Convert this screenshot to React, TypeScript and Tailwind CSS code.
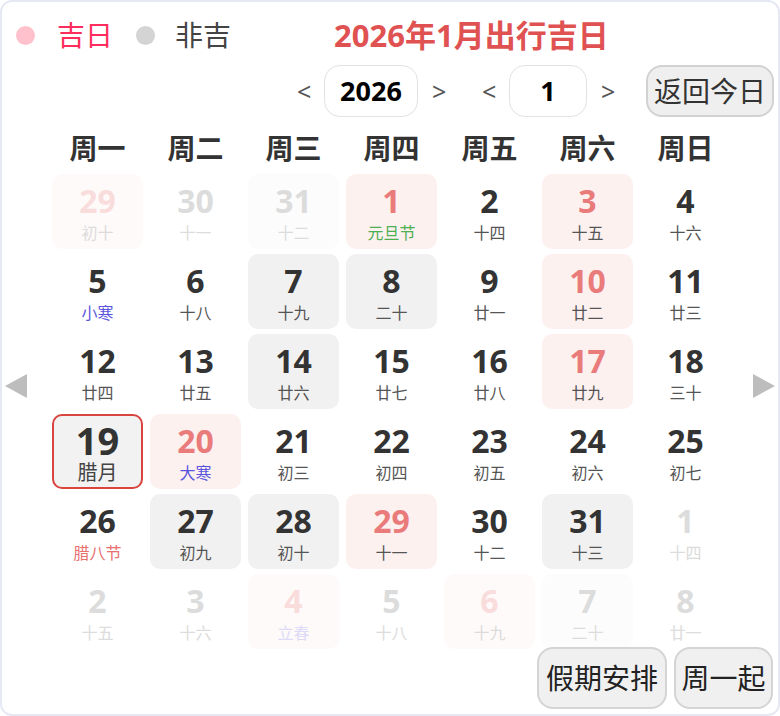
type Kind = "plain" | "red" | "gray";

type Day = {
  d: number;
  l: string;
  kind?: Kind;
  faded?: boolean;
  lc?: string;
  today?: boolean;
};

const WEEK = ["周一", "周二", "周三", "周四", "周五", "周六", "周日"];

const DAYS: Day[] = [
  { d: 29, l: "初十", kind: "red", faded: true },
  { d: 30, l: "十一", faded: true },
  { d: 31, l: "十二", kind: "gray", faded: true },
  { d: 1, l: "元旦节", kind: "red", lc: "text-[#4caf50]" },
  { d: 2, l: "十四" },
  { d: 3, l: "十五", kind: "red" },
  { d: 4, l: "十六" },

  { d: 5, l: "小寒", lc: "text-[#5b55dd]" },
  { d: 6, l: "十八" },
  { d: 7, l: "十九", kind: "gray" },
  { d: 8, l: "二十", kind: "gray" },
  { d: 9, l: "廿一" },
  { d: 10, l: "廿二", kind: "red" },
  { d: 11, l: "廿三" },

  { d: 12, l: "廿四" },
  { d: 13, l: "廿五" },
  { d: 14, l: "廿六", kind: "gray" },
  { d: 15, l: "廿七" },
  { d: 16, l: "廿八" },
  { d: 17, l: "廿九", kind: "red" },
  { d: 18, l: "三十" },

  { d: 19, l: "腊月", today: true },
  { d: 20, l: "大寒", kind: "red", lc: "text-[#5b55dd]" },
  { d: 21, l: "初三" },
  { d: 22, l: "初四" },
  { d: 23, l: "初五" },
  { d: 24, l: "初六" },
  { d: 25, l: "初七" },

  { d: 26, l: "腊八节", lc: "text-[#e86f6f]" },
  { d: 27, l: "初九", kind: "gray" },
  { d: 28, l: "初十", kind: "gray" },
  { d: 29, l: "十一", kind: "red" },
  { d: 30, l: "十二" },
  { d: 31, l: "十三", kind: "gray" },
  { d: 1, l: "十四", faded: true },

  { d: 2, l: "十五", faded: true },
  { d: 3, l: "十六", faded: true },
  { d: 4, l: "立春", kind: "red", faded: true, lc: "text-[#dcdaf8]" },
  { d: 5, l: "十八", faded: true },
  { d: 6, l: "十九", kind: "red", faded: true },
  { d: 7, l: "二十", kind: "gray", faded: true },
  { d: 8, l: "廿一", faded: true },
];

function cellBg(day: Day) {
  if (day.today) return "bg-[#f2f2f2] border-2 border-[#d9443f]";
  if (day.faded) {
    if (day.kind === "red") return "bg-[#fefaf9]";
    if (day.kind === "gray") return "bg-[#fcfcfc]";
    return "";
  }
  if (day.kind === "red") return "bg-[#fdf1f0]";
  if (day.kind === "gray") return "bg-[#f1f1f1]";
  return "";
}

function numColor(day: Day) {
  if (day.faded) return day.kind === "red" ? "text-[#f9dcdc]" : "text-[#dcdcdc]";
  if (day.kind === "red") return "text-[#e97b7b]";
  return "text-[#333333]";
}

function lunarColor(day: Day) {
  if (day.lc) return day.lc;
  if (day.faded) return "text-[#dcdcdc]";
  return "text-[#555555]";
}

function Cell({ day }: { day: Day }) {
  if (day.today) {
    return (
      <div className={`flex flex-col items-center rounded-[10px] pt-[5px] ${cellBg(day)}`}>
        <span className="text-[38px] font-bold leading-[38px] text-[#333]">{day.d}</span>
        <span className="mt-[4px] text-[20px] leading-[20px] text-[#444]">{day.l}</span>
      </div>
    );
  }
  return (
    <div className={`flex flex-col items-center rounded-[10px] pt-[11px] ${cellBg(day)}`}>
      <span className={`text-[32px] font-bold leading-none ${numColor(day)}`}>{day.d}</span>
      <span className={`mt-[8px] text-[16px] leading-none ${lunarColor(day)}`}>{day.l}</span>
    </div>
  );
}

export default function App() {
  return (
    <div className="relative flex h-[716px] w-[780px] flex-col overflow-hidden rounded-[12px] border-2 border-[#e6e9f4] bg-white font-['Noto_Sans','Noto_Sans_CJK_SC',sans-serif]">
      {/* legend + title */}
      <div className="mt-[8px] flex h-[50px] items-center pl-[14px]">
        <span className="h-[19px] w-[19px] rounded-full bg-[#ffc2cc]" />
        <span className="ml-[22px] text-[28px] leading-none text-[#ff2d5c]">吉日</span>
        <span className="ml-[23px] h-[19px] w-[19px] rounded-full bg-[#d4d4d4]" />
        <span className="ml-[20px] text-[28px] leading-none text-[#444]">非吉</span>
        <span className="ml-[103px] text-[31px] font-bold leading-none text-[#e05252]">2026年1月出行吉日</span>
      </div>

      {/* year / month controls */}
      <div className="mt-[4px] flex h-[54px] items-center pl-[295px]">
        <span className="w-[14px] text-center text-[25px] leading-none text-[#555]">&lt;</span>
        <div className="ml-[13px] flex h-[52px] w-[94px] items-center justify-center rounded-[16px] border-[1.5px] border-[#e2e2e2] text-[27px] font-bold text-black">
          2026
        </div>
        <span className="ml-[14px] w-[14px] text-center text-[25px] leading-none text-[#555]">&gt;</span>
        <span className="ml-[36px] w-[14px] text-center text-[25px] leading-none text-[#555]">&lt;</span>
        <div className="ml-[13px] flex h-[52px] w-[78px] items-center justify-center rounded-[16px] border-[1.5px] border-[#e2e2e2] text-[27px] font-bold text-black">
          1
        </div>
        <span className="ml-[14px] w-[14px] text-center text-[25px] leading-none text-[#555]">&gt;</span>
        <button
          type="button"
          className="ml-[31px] flex h-[52px] w-[128px] items-center justify-center rounded-[16px] border-2 border-[#d2d2d2] bg-[#efefef] text-[28px] text-[#333]"
        >
          返回今日
        </button>
      </div>

      {/* week header */}
      <div className="mt-[8px] grid h-[44px] grid-cols-[repeat(7,91px)] items-center gap-x-[7px] pl-[50px]">
        {WEEK.map((w) => (
          <span key={w} className="text-center text-[28px] font-bold leading-none text-[#333]">
            {w}
          </span>
        ))}
      </div>

      {/* days */}
      <div className="mt-[4px] grid grid-cols-[repeat(7,91px)] auto-rows-[75px] gap-x-[7px] gap-y-[5px] pl-[50px]">
        {DAYS.map((day, i) => (
          <Cell key={i} day={day} />
        ))}
      </div>

      {/* bottom buttons */}
      <div className="-mt-[2px] flex h-[62px] justify-end gap-[7px] pr-[5px]">
        <button
          type="button"
          className="flex h-[62px] w-[130px] items-center justify-center rounded-[16px] border-2 border-[#d4d4d4] bg-[#f0f0f0] text-[28px] text-[#222]"
        >
          假期安排
        </button>
        <button
          type="button"
          className="flex h-[62px] w-[99px] items-center justify-center rounded-[16px] border-2 border-[#d4d4d4] bg-[#f0f0f0] text-[28px] text-[#222]"
        >
          周一起
        </button>
      </div>

      {/* side arrows */}
      <svg className="absolute left-[3px] top-[372px]" width="22" height="24" viewBox="0 0 22 24">
        <polygon points="22,0 22,24 0,12" fill="#bdbdbd" />
      </svg>
      <svg className="absolute right-[3px] top-[372px]" width="22" height="24" viewBox="0 0 22 24">
        <polygon points="0,0 0,24 22,12" fill="#bdbdbd" />
      </svg>
    </div>
  );
}
